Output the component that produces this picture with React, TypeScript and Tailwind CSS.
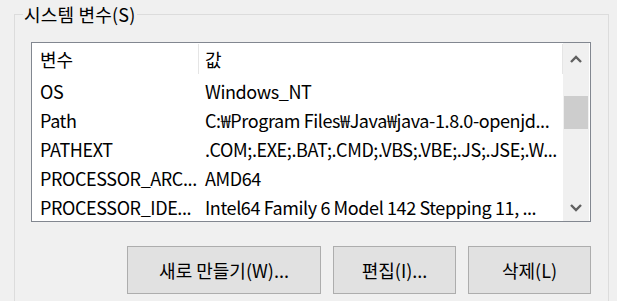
import React from "react";

const font = { fontFamily: '"Noto Sans CJK KR", "Noto Sans", sans-serif' };

const rows: [string, string][] = [
  ["OS", "Windows_NT"],
  ["Path", "C:₩Program Files₩Java₩java-1.8.0-openjd..."],
  ["PATHEXT", ".COM;.EXE;.BAT;.CMD;.VBS;.VBE;.JS;.JSE;.W..."],
  ["PROCESSOR_ARC...", "AMD64"],
  ["PROCESSOR_IDE...", "Intel64 Family 6 Model 142 Stepping 11, ..."],
];

function ChevronUp() {
  return (
    <svg width="12" height="8" viewBox="0 0 12 8">
      <path d="M1 7 L6 2 L11 7" fill="none" stroke="#606060" strokeWidth="2.4" />
    </svg>
  );
}
function ChevronDown() {
  return (
    <svg width="12" height="8" viewBox="0 0 12 8">
      <path d="M1 1 L6 6 L11 1" fill="none" stroke="#606060" strokeWidth="2.4" />
    </svg>
  );
}

export default function App() {
  return (
    <div
      className="w-[617px] h-[301px] bg-[#f0f0f0] overflow-hidden pt-[14px] pl-[14px] text-black text-[18px]"
      style={font}
    >
      <div className="relative w-[595px] h-[320px] border border-[#dcdcdc] pl-[16px] pt-[27px]">
        <span className="absolute left-[8px] top-[-13px] bg-[#f0f0f0] px-[1px] leading-[24px] text-[18px] tracking-[0.2px]">
          시스템 변수(S)
        </span>
        <div className="w-[560px] h-[180px] border border-[#828790] bg-white flex overflow-hidden">
          <div className="w-[531px] shrink-0 flex flex-col overflow-hidden">
            <div className="flex h-[34px] shrink-0">
              <div className="w-[167px] shrink-0 h-[30px] mt-[1px] border-r border-[#e5e5e5] pl-[8px] flex items-center leading-[24px]">
                변수
              </div>
              <div className="flex-1 h-[30px] mt-[1px] border-r border-[#e5e5e5] pl-[6px] flex items-center leading-[24px]">
                값
              </div>
            </div>
            {rows.map(([k, v]) => (
              <div
                key={k}
                className="flex h-[29px] items-center shrink-0 whitespace-nowrap leading-[24px] pb-[1px] tracking-[-0.4px]"
              >
                <div className="w-[167px] shrink-0 pl-[8px] overflow-hidden">{k}</div>
                <div className="flex-1 min-w-0 pl-[6px] overflow-hidden">{v}</div>
              </div>
            ))}
          </div>
          <div className="w-[26px] shrink-0 bg-[#f0f0f0] flex flex-col items-center">
            <div className="h-[32px] w-full flex items-center justify-center">
              <ChevronUp />
            </div>
            <div className="mt-[21px] w-[24px] h-[33px] bg-[#cdcdcd]" />
            <div className="flex-1" />
            <div className="h-[30px] w-full flex items-center justify-center pt-[4px]">
              <ChevronDown />
            </div>
          </div>
        </div>
        <div className="flex gap-[12px] mt-[24px] ml-[96px]">
          <button className="w-[194px] h-[48px] bg-[#e1e1e1] border border-[#adadad] text-[18px] leading-none">
            새로 만들기(W)...
          </button>
          <button className="w-[123px] h-[48px] bg-[#e1e1e1] border border-[#adadad] text-[18px] leading-none">
            편집(I)...
          </button>
          <button className="w-[123px] h-[48px] bg-[#e1e1e1] border border-[#adadad] text-[18px] leading-none">
            삭제(L)
          </button>
        </div>
      </div>
    </div>
  );
}
